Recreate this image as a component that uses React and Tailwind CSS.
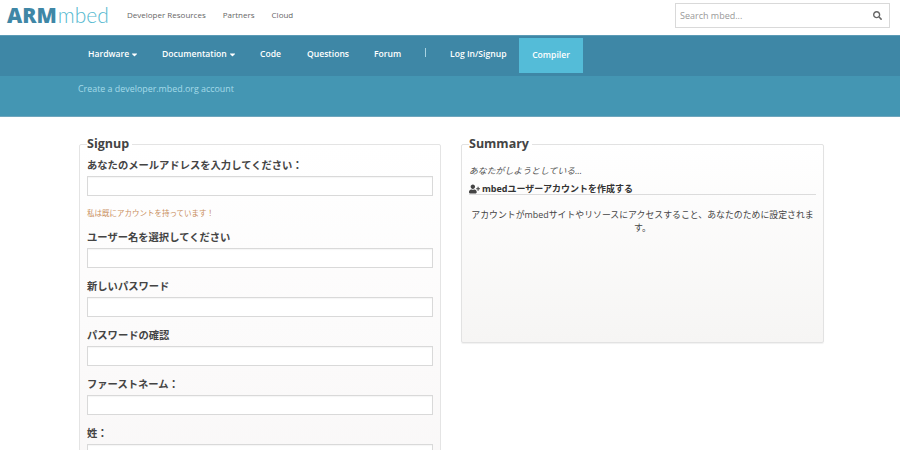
import React from 'react';
import { FaCaretDown, FaSearch, FaUserPlus } from 'react-icons/fa';

const font = "font-['Open_Sans','Noto_Sans_CJK_JP',sans-serif]";

const fields = [
    { label: 'あなたのメールアドレスを入力してください：', note: '私は既にアカウントを持っています！' },
    { label: 'ユーザー名を選択してください' },
    { label: '新しいパスワード' },
    { label: 'パスワードの確認' },
    { label: 'ファーストネーム：' },
    { label: '姓：' },
];

const NavItem = ({ children, className = '' }) => (
    <a className={`flex items-center text-[8.6px] font-semibold text-white ${className}`}>{children}</a>
);

const Field = ({ label, note }) => (
    <div className={note ? 'mb-[12px]' : 'mb-[11px]'}>
        <label className="mb-[4px] block h-[14px] text-[10.3px] leading-[14px] font-bold text-[#444]">{label}</label>
        <input className="block h-[20px] w-full border border-[#d9d9d9] bg-white shadow-[inset_0_1px_1px_rgba(0,0,0,0.04)]" />
        {note && <p className="mt-[12px] h-[10px] text-[7.5px] leading-[10px] text-[#c98f5e]">{note}</p>}
    </div>
);

const App = () => {
    return (
        <div className={`${font} h-[450px] w-[900px] overflow-hidden bg-white`}>
            {/* Top bar */}
            <div className="flex h-[35px] items-center">
                <div className="flex w-[127px] items-baseline pb-[6px] pl-[7px] leading-none">
                    <span className="text-[21px] font-extrabold text-[#3f87a6]">ARM</span>
                    <span className="ml-[1px] font-['Lato',sans-serif] text-[21px] font-light text-[#55b9d0]">mbed</span>
                </div>
                <div className="flex gap-[17px] pb-[6px] text-[8px] text-[#666]">
                    <a>Developer Resources</a>
                    <a>Partners</a>
                    <a>Cloud</a>
                </div>
                <div className="mr-[10px] mb-[4px] ml-auto flex h-[25px] w-[215px] items-center justify-between border border-[#d9d9d9] pr-[7px] pl-[4px]">
                    <span className="text-[9px] text-[#999]">Search mbed...</span>
                    <FaSearch className="h-[9px] w-[9px] text-[#666]" />
                </div>
            </div>

            {/* Nav */}
            <nav className="flex h-[41px] border-t border-[#5b9bb6] bg-[#3e87a6] pt-[2px] pb-[3px] pl-[88px]">
                <NavItem className="w-[74px] pb-[2px]">Hardware<FaCaretDown className="ml-[1px] h-[9px] w-[9px]" /></NavItem>
                <NavItem className="w-[98px] pb-[2px]">Documentation<FaCaretDown className="ml-[1px] h-[9px] w-[9px]" /></NavItem>
                <NavItem className="w-[47px] pb-[2px]">Code</NavItem>
                <NavItem className="w-[67px] pb-[2px]">Questions</NavItem>
                <NavItem className="w-[51px] pb-[2px]">Forum</NavItem>
                <div className="mt-[10px] h-[9px] w-[1px] bg-[#a9d3e2]" />
                <NavItem className="ml-[24px] w-[69px] pb-[2px]">Log In/Signup</NavItem>
                <NavItem className="w-[64px] justify-center bg-[#54bcd8]">Compiler</NavItem>
            </nav>

            {/* Sub header */}
            <div className="h-[41px] border-b border-[#6fa6bd] bg-[#4496b3] pt-[5px] pl-[78px] text-[8.9px] leading-[15px] text-[#a5dbe9]">
                Create a developer.mbed.org account
            </div>

            {/* Panels */}
            <div className="flex gap-[20px] pt-[18px] pl-[79px]">
                <fieldset className="h-[400px] w-[362px] shrink-0 rounded-[2px] border border-[#e4e4e4] bg-gradient-to-b from-white to-[#f8f6f6] px-[7px]">
                    <legend className="pr-[3px] text-[12.5px] leading-[18px] font-bold text-[#444]">Signup</legend>
                    <div className="pt-[5px]">
                        {fields.map((f) => (
                            <Field key={f.label} label={f.label} note={f.note} />
                        ))}
                    </div>
                </fieldset>

                <fieldset className="h-[208px] w-[363px] shrink-0 rounded-[2px] border border-[#e2e2e2] bg-gradient-to-b from-white to-[#f6f5f4] px-[7px] shadow-[0_1px_1px_rgba(0,0,0,0.06)]">
                    <legend className="pr-[3px] text-[12.5px] leading-[18px] font-bold text-[#444]">Summary</legend>
                    <p className="mt-[11px] text-[8.9px] leading-[14px] text-[#555] italic">あなたがしようとしている...</p>
                    <div className="mt-[5px] flex h-[12px] items-center gap-[2px] border-b border-[#dcdcdc] text-[9px] font-bold text-[#333]">
                        <FaUserPlus className="h-[10px] w-[11px] text-[#444]" />
                        <span>mbedユーザーアカウントを作成する</span>
                    </div>
                    <p className="mt-[13px] text-center text-[8.9px] leading-[13px] text-[#444]">
                        アカウントがmbedサイトやリソースにアクセスすること、あなたのために設定されます。
                    </p>
                </fieldset>
            </div>
        </div>
    );
};

export default App;
